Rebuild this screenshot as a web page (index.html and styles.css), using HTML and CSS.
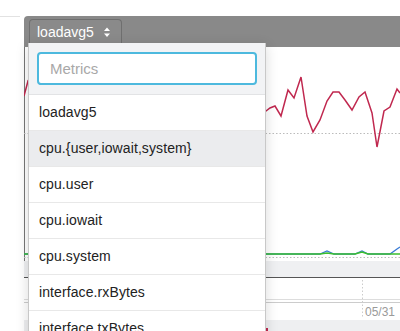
FILE: index.html
```html
<!DOCTYPE html>
<html lang="en">

<head>
    <meta charset="UTF-8">
    <meta name="viewport" content="width=device-width, initial-scale=1.0">
    <title>Metrics</title>
    <link rel="stylesheet" href="styles.css">
</head>

<body>
    <div class="page">
        <div class="stub"></div>
        <div class="panel">
            <div class="panel-bar">
                <button type="button" class="metric-btn">
                    <span>loadavg5</span>
                    <svg class="caret" width="8" height="11" viewBox="0 0 8 11">
                        <path d="M4 0.5 L7 4 L1 4 Z M1 6.5 L7 6.5 L4 10 Z" fill="#fff" />
                    </svg>
                </button>
            </div>

            <!-- 차트 영역 -->
            <svg class="chart" width="376" height="284" viewBox="24 47 376 284">
                <line x1="24.5" y1="47" x2="24.5" y2="277" stroke="#777" />
                <line x1="28.5" y1="277" x2="28.5" y2="331" stroke="#ddd" />
                <line x1="24" y1="133.5" x2="400" y2="133.5" stroke="#bbb" stroke-dasharray="1.5,2" />
                <line x1="24" y1="257.5" x2="400" y2="257.5" stroke="#bbb" stroke-dasharray="1.5,2" />
                <rect x="24" y="261" width="376" height="16" fill="#eff0f2" />
                <line x1="24" y1="277.5" x2="400" y2="277.5" stroke="#555" />
                <line x1="24" y1="299.5" x2="400" y2="299.5" stroke="#ddd" />
                <line x1="24" y1="302.5" x2="400" y2="302.5" stroke="#ccc" />
                <line x1="362.5" y1="280" x2="362.5" y2="317" stroke="#ccc" stroke-dasharray="1.5,2" />
                <text x="365" y="316" class="axis-label">05/31</text>
                <rect x="24" y="320" width="376" height="11" fill="#eeeff1" />
                <rect x="266" y="328" width="2" height="3" fill="#c0284f" />

                <polyline fill="none" stroke="#3a7bd5" stroke-width="1.3"
                    points="24,254 320,254 327,251 334,254 355,254 362,251 368,254 390,254 397,249 400,247" />
                <polyline fill="none" stroke="#3bbf2f" stroke-width="1.5"
                    points="24,254 320,254 327,253 334,254 355,254 362,252 368,254 400,254" />
                <polyline fill="none" stroke="#c0284f" stroke-width="1.5"
                    points="24,96 28,81 60,100 120,90 180,120 240,95 262,110 266,111 270,108 275,106 281,116 288,90 294,98 301,77 307,116 313,132 320,120 327,101 333,92 339,92 345,100 352,110 359,97 365,92 372,113 377,147 384,111 390,107 397,89 400,93" />
            </svg>

            <!-- 메트릭 선택 드롭다운 -->
            <div class="dropdown">
                <div class="dropdown-search">
                    <input type="text" class="search-input" placeholder="Metrics" autofocus>
                </div>
                <ul class="dropdown-list">
                    <li class="dropdown-item">loadavg5</li>
                    <li class="dropdown-item active">cpu.{user,iowait,system}</li>
                    <li class="dropdown-item">cpu.user</li>
                    <li class="dropdown-item">cpu.iowait</li>
                    <li class="dropdown-item">cpu.system</li>
                    <li class="dropdown-item">interface.rxBytes</li>
                    <li class="dropdown-item">interface.txBytes</li>
                </ul>
            </div>
        </div>
    </div>
</body>

</html>
```

FILE: styles.css
```css
/* 전체 페이지 */
body {
    margin: 0;
    padding: 0;
    background: #fff;
    font-family: 'Liberation Sans', Arial, sans-serif;
    color: #222;
    overflow: hidden;
}

.page {
    display: flex;
    gap: 4px;
    padding-top: 16px;
    height: 315px;
}

.stub {
    width: 20px;
    border-top: 1px solid #e2e2e2;
}

/* 패널 */
.panel {
    position: relative;
    flex: 1;
    display: flex;
    flex-direction: column;
}

.panel-bar {
    height: 31px;
    box-sizing: border-box;
    padding: 3px 0 0 5px;
    background: #898989;
    border-radius: 4px 0 0 0;
}

.metric-btn {
    display: flex;
    align-items: center;
    gap: 9px;
    height: 25px;
    width: 93px;
    box-sizing: border-box;
    padding: 0 0 1px 7px;
    border: 1px solid #6f6f6f;
    border-bottom: none;
    border-radius: 4px 4px 0 0;
    background: #8a8a8a;
    color: #fff;
    font-family: inherit;
    font-size: 14px;
}

.caret {
    margin-top: 1px;
}

.chart {
    display: block;
}

.axis-label {
    font-family: 'Liberation Sans', Arial, sans-serif;
    font-size: 12px;
    fill: #9a9a9a;
}

/* 드롭다운 */
.dropdown {
    position: absolute;
    left: 4px;
    top: 27px;
    width: 238px;
    box-sizing: border-box;
    background: #fff;
    border: 1px solid #c8c8c8;
    border-top: none;
    box-shadow: 0 3px 12px rgba(0, 0, 0, 0.15);
}

.dropdown-search {
    padding: 9px 8px;
    background: #f2f3f5;
    border-bottom: 1px solid #e2e3e5;
}

.search-input {
    display: block;
    width: 100%;
    height: 33px;
    box-sizing: border-box;
    padding: 0 11px;
    border: 2px solid #4db9de;
    border-radius: 4px;
    font-family: inherit;
    font-size: 15px;
    color: #222;
    outline: none;
}

.search-input::placeholder {
    color: #a8a8a8;
}

.dropdown-list {
    list-style: none;
    margin: 0;
    padding: 0;
}

.dropdown-item {
    height: 35px;
    line-height: 35px;
    padding: 0 10px;
    font-size: 14px;
    letter-spacing: 0.1px;
    border-bottom: 1px solid #e8e8e8;
    white-space: nowrap;
}

.dropdown-item.active {
    background: #ebecee;
}
```
